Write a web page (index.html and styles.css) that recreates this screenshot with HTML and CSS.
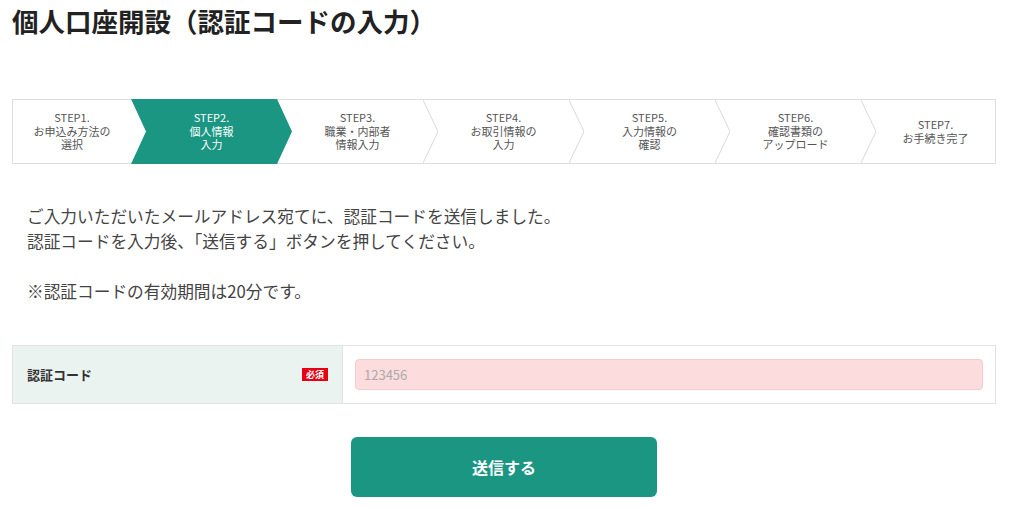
FILE: index.html
```html
<!DOCTYPE html>
<html lang="ja">
<head>
<meta charset="utf-8">
<title>個人口座開設（認証コードの入力）</title>
<link rel="stylesheet" href="styles.css">
</head>
<body>
<div class="page">
  <h1 class="title">個人口座開設（認証コードの入力）</h1>

  <ol class="stepper">
    <li class="step"><span class="step-label">STEP1.<br>お申込み方法の<br>選択</span></li>
    <li class="step active"><span class="step-label">STEP2.<br>個人情報<br>入力</span></li>
    <li class="step"><span class="step-label">STEP3.<br>職業・内部者<br>情報入力</span><svg class="sep" viewBox="0 0 15 63" preserveAspectRatio="none"><polyline points="0,0 15,31.5 0,63" fill="none" stroke="#d9d9d9" stroke-width="1"/></svg></li>
    <li class="step"><span class="step-label">STEP4.<br>お取引情報の<br>入力</span><svg class="sep" viewBox="0 0 15 63" preserveAspectRatio="none"><polyline points="0,0 15,31.5 0,63" fill="none" stroke="#d9d9d9" stroke-width="1"/></svg></li>
    <li class="step"><span class="step-label">STEP5.<br>入力情報の<br>確認</span><svg class="sep" viewBox="0 0 15 63" preserveAspectRatio="none"><polyline points="0,0 15,31.5 0,63" fill="none" stroke="#d9d9d9" stroke-width="1"/></svg></li>
    <li class="step"><span class="step-label">STEP6.<br>確認書類の<br>アップロード</span><svg class="sep" viewBox="0 0 15 63" preserveAspectRatio="none"><polyline points="0,0 15,31.5 0,63" fill="none" stroke="#d9d9d9" stroke-width="1"/></svg></li>
    <li class="step"><span class="step-label">STEP7.<br>お手続き完了</span></li>
  </ol>

  <div class="message">
    <p>ご入力いただいたメールアドレス宛てに、認証コードを送信しました。<br>認証コードを入力後、「送信する」ボタンを押してください。</p>
    <p class="note">※認証コードの有効期間は20分です。</p>
  </div>

  <div class="form-row">
    <div class="form-label">
      <span class="label-text">認証コード</span>
      <span class="badge">必須</span>
    </div>
    <div class="form-field">
      <input class="code-input" type="text" placeholder="123456">
    </div>
  </div>

  <button class="submit" type="button">送信する</button>
</div>
</body>
</html>
```

FILE: styles.css
```css
* {
  box-sizing: border-box;
}

body {
  margin: 0;
  background: #ffffff;
  font-family: "Noto Sans CJK JP", "Noto Sans", sans-serif;
  color: #333333;
}

.page {
  width: 1024px;
  padding: 3px 28px 0 12px;
}

.title {
  margin: 0;
  font-size: 26.5px;
  line-height: 36px;
  font-weight: 700;
  color: #222222;
}

.stepper {
  list-style: none;
  margin: 60px 0 0 0;
  padding: 0;
  height: 65px;
  border: 1px solid #dedede;
  display: grid;
  grid-template-columns: 118px repeat(5, 146px) 1fr;
}

.step {
  position: relative;
  display: flex;
  align-items: center;
  justify-content: center;
  padding-left: 15px;
  text-align: center;
}

.step:first-child {
  padding-left: 0;
}

.step-label {
  position: relative;
  z-index: 3;
  font-size: 11px;
  line-height: 13.5px;
  color: #555555;
}

.step.active {
  z-index: 2;
}

.step.active::before {
  content: "";
  position: absolute;
  top: -1px;
  bottom: -1px;
  left: 0;
  right: -15px;
  background: #1a9682;
  clip-path: polygon(0 0, calc(100% - 15px) 0, 100% 50%, calc(100% - 15px) 100%, 0 100%, 15px 50%);
}

.step.active .step-label {
  color: #ffffff;
}

.sep {
  position: absolute;
  top: 0;
  right: -15px;
  width: 15px;
  height: 100%;
  z-index: 1;
}

.message {
  margin-top: 40px;
  padding-left: 15px;
  font-size: 16.7px;
  line-height: 25px;
  color: #444444;
}

.message p {
  margin: 0;
}

.message .note {
  margin-top: 25px;
}

.form-row {
  margin-top: 41px;
  display: grid;
  grid-template-columns: 330px 1fr;
  border: 1px solid #e3e3e3;
}

.form-label {
  background: #ebf3f1;
  border-right: 1px solid #e3e3e3;
  display: flex;
  align-items: center;
  justify-content: space-between;
  padding: 0 14px 0 14px;
}

.label-text {
  font-size: 13px;
  font-weight: 700;
  color: #333333;
}

.badge {
  background: #e50012;
  color: #ffffff;
  font-size: 9px;
  font-weight: 700;
  line-height: 13px;
  padding: 0 4px;
}

.form-field {
  padding: 13px 12px;
}

.code-input {
  display: block;
  width: 100%;
  height: 31px;
  margin: 0;
  padding: 0 8px;
  background: #fddcdd;
  border: 1px solid #f5cccc;
  border-radius: 4px;
  font-family: "Noto Sans CJK JP", "Noto Sans", sans-serif;
  font-size: 13px;
  color: #333333;
  outline: none;
}

.code-input::placeholder {
  color: #aaaaaa;
}

.submit {
  display: block;
  margin: 33px auto 0 auto;
  width: 306px;
  height: 60px;
  border: none;
  border-radius: 6px;
  background: #1a9682;
  color: #ffffff;
  font-family: "Noto Sans CJK JP", "Noto Sans", sans-serif;
  font-size: 16px;
  font-weight: 700;
}
```
